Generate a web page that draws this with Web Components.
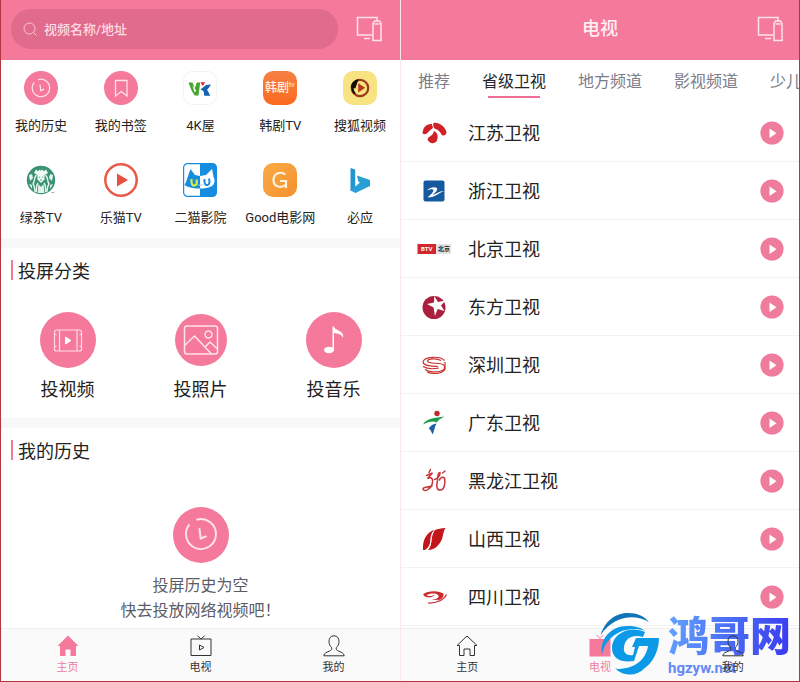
<!DOCTYPE html>
<html lang="zh-CN">
<head>
<meta charset="utf-8">
<meta name="viewport" content="width=device-width, initial-scale=1">
<title>投屏</title>
<style>
  :root {
    --pink: #f5799b;
    --ink: #222;
    --muted: #5c5c68;
    --band: #f8f8f9;
    --line: #f2f2f3;
  }
  body {
    margin: 0;
    background: #fff;
    color: var(--ink);
    font-family: Roboto, "Noto Sans CJK SC", sans-serif;
  }
</style>
</head>
<body>
<cast-app>
  <phone-panel slot="left">
    <app-header slot="header"><search-field></search-field></app-header>
    <quick-grid>
      <quick-link icon="history">我的历史</quick-link>
      <quick-link icon="bookmark">我的书签</quick-link>
      <quick-link icon="wk">4K屋</quick-link>
      <quick-link icon="hanju">韩剧TV</quick-link>
      <quick-link icon="sohu">搜狐视频</quick-link>
      <quick-link icon="lvcha">绿茶TV</quick-link>
      <quick-link icon="lemao">乐猫TV</quick-link>
      <quick-link icon="cat">二猫影院</quick-link>
      <quick-link icon="good">Good电影网</quick-link>
      <quick-link icon="bing">必应</quick-link>
    </quick-grid>
    <page-section heading="投屏分类">
      <category-row>
        <category-button icon="video">投视频</category-button>
        <category-button icon="photo">投照片</category-button>
        <category-button icon="music">投音乐</category-button>
      </category-row>
    </page-section>
    <page-section heading="我的历史">
      <empty-history><span>投屏历史为空</span><span>快去投放网络视频吧！</span></empty-history>
    </page-section>
    <tab-bar slot="footer" current="home"></tab-bar>
  </phone-panel>
  <phone-panel slot="right" class="second">
    <app-header slot="header" heading="电视"></app-header>
    <channel-tabs>
      <button type="button">推荐</button>
      <button type="button" aria-current="true">省级卫视</button>
      <button type="button">地方频道</button>
      <button type="button">影视频道</button>
      <button type="button">少儿</button>
    </channel-tabs>
    <channel-list>
      <channel-row logo="jiangsu">江苏卫视</channel-row>
      <channel-row logo="zhejiang">浙江卫视</channel-row>
      <channel-row logo="beijing">北京卫视</channel-row>
      <channel-row logo="dongfang">东方卫视</channel-row>
      <channel-row logo="shenzhen">深圳卫视</channel-row>
      <channel-row logo="guangdong">广东卫视</channel-row>
      <channel-row logo="heilongjiang">黑龙江卫视</channel-row>
      <channel-row logo="shanxi">山西卫视</channel-row>
      <channel-row logo="sichuan">四川卫视</channel-row>
    </channel-list>
    <tab-bar slot="footer" current="tv"></tab-bar>
  </phone-panel>
  <site-mark slot="mark"></site-mark>
</cast-app>

<script>
const CLOCK = '<path d="M8.9 2.5A10 10 0 1 1 4.3 5.6M10.9 8.1l.9 6.9 3.9-1.6"/>';

/* Artwork on a 34-unit canvas for the shortcut grid. */
const QUICK = {
  history: `<circle cx="17" cy="17" r="17" fill="#f5799b"/><g transform="translate(6.500 6.500) scale(.87)" fill="none" stroke="#ffe3ec" stroke-width="1.400">${CLOCK}</g>`,
  bookmark: `<circle cx="17" cy="17" r="17" fill="#f5799b"/><path d="M11.500 9.500h11.500v15.500l-5.700-4.400-5.800 4.400z" fill="none" stroke="#ffe3ec" stroke-width="1.300"/>`,
  wk: `<rect x=".5" y=".5" width="33" height="33" rx="9" fill="#fff" stroke="#f3f3f3"/>
    <path d="M5.500 11.500h4l2.300 6 2-6h3.400l-1.700 13h-3.700l-3-4.500z" fill="#45a52c"/><path d="M9.500 14.500l2 7 1.600-1.700-1.300-2.300z" fill="#fff"/>
    <path d="M17.500 11.300h4.700l-2.400 3.800z" fill="#d8242c"/>
    <path d="M28 13.500l-5 .5-5.500 4.500 3 1.500.8 4.700h6l-3-5.700z" fill="#1462b0"/><path d="M28.500 16.500l-4.500 2 4 4z" fill="#fff"/>`,
  hanju: `<defs><linearGradient id="a" x2="0" y2="1"><stop stop-color="#f58044"/><stop offset="1" stop-color="#fb6a1e"/></linearGradient></defs>
    <rect width="34" height="34" rx="10" fill="url(#a)"/><text x="2" y="21" font-size="12" font-weight="500" fill="#fff3e9">韩剧</text><text x="26" y="16" font-size="7" fill="#fff3e9">tv</text>`,
  sohu: `<rect width="34" height="34" rx="10" fill="#f8e382"/>
    <circle cx="17" cy="17" r="8.200" fill="none" stroke="#9c3a1c" stroke-width="2.200"/>
    <path d="M16 8.500a8.500 8.500 0 0 0-5 14.500l2-.5a7 7 0 0 1 0-10.500z" fill="#150d06"/><path d="M15.500 8.200a9 9 0 0 0-7.800 8l4.600 1.300z" fill="#150d06"/>
    <path d="M15.200 12.200l7 4.600-7 4.700z" fill="#b8381c"/>`,
  lvcha: `<circle cx="17" cy="17" r="14.200" fill="#3b9272"/>
    <path d="M10 10l2-3.500 2 1.800L17 5.500l3 2.800 2-1.800 2 3.500-3 1.800h-8z" fill="#f0faf5"/>
    <circle cx="17" cy="6.500" r="1" fill="#2f8a67"/>
    <path d="M12.500 12c-3 3-1.500 6-3.500 9 2 2 1 5 2.500 8M21.500 12c3 3 1.500 6 3.500 9-2 2-1 5-2.500 8M14 20c-2 2-1 5-2 9M20 20c2 2 1 5 2 9" stroke="#e9f6f0" stroke-width="1.400" fill="none"/>
    <path d="M13.500 11h7v5.500L17 20l-3.500-3.500z" fill="#f0faf5"/><path d="M15 14.200h1.200M18 14.200h1.200M16 17h2" stroke="#2f8a67" stroke-width=".8"/>
    <path d="M14.500 21l2.500 3 2.500-3 1 9h-7z" fill="#dff1e9"/><path d="M5 12l3-1 1 4-3 3zM29 12l-3-1-1 4 3 3zM5 21l3 1v4zM29 21l-3 1v4z" fill="#e9f6f0"/>
    <path d="M27.500 29.500h2.500" stroke="#777" stroke-width=".7"/>`,
  lemao: `<circle cx="17" cy="17" r="15.700" fill="#fff" stroke="#e85a4a" stroke-width="2.500"/><path d="M13 10.600v13l11-6.500z" fill="#e8503f"/>`,
  cat: `<rect x=".6" y=".6" width="32.800" height="32.800" rx="4" fill="#fff" stroke="#178de0" stroke-width="1.200"/>
    <path d="M17 .6h12.400a4 4 0 0 1 4 4v24.800a4 4 0 0 1-4 4H17z" fill="#178de0"/>
    <path d="M7.500 6l4.500 6 5 1v12.500c-6 .5-12-1-15.500-3.500 2.500-4 3.500-10 6-16z" fill="#178de0"/>
    <path d="M17 13l6-1 6-6c1 4 1 7 2.500 10.500.5 3-1 6-3.500 7-3 1.500-7 2-11 2z" fill="#fff"/>
    <path d="M8.500 16c-.5 5 1 7 3 6.500s2.800-2.500 2-6" fill="none" stroke="#d8ee45" stroke-width="2.200"/><path d="M21.500 16c-.5 5 1 6.500 3 6s2.500-3 1.500-6.500" fill="none" stroke="#178de0" stroke-width="2"/>
    <path d="M14.500 21.500l2.500 1 2.500-1" fill="none" stroke="#8ccbf5" stroke-width="1"/>`,
  good: `<defs><linearGradient id="b" x2="1" y2="1"><stop stop-color="#faab48"/><stop offset="1" stop-color="#f4902c"/></linearGradient></defs>
    <rect width="34" height="34" rx="10" fill="url(#b)"/><path d="M22.500 11.500c-4.500-3.500-12-1.500-12 5.500 0 7 8 8.700 12.500 4.500v-3.500h-6M23 18v7" fill="none" stroke="#fff2dc" stroke-width="2.200"/>`,
  bing: `<path d="M7.500 5l4.700 1.600V25l-4.700 3z" fill="#2196cf"/><path d="M14 12.500l13 4.500v6L12.500 30l-5-2.500 9.500-8-1.700-1z" fill="#2a9fd6"/>`
};

/* Line artwork for the large round buttons, 56-unit canvas. */
const ROUND = {
  video: `<circle cx="28" cy="28" r="28" fill="#f5799b"/><g fill="none" stroke="#ffdce7" stroke-width="1.200"><rect x="14.500" y="18" width="27" height="21" rx="2"/><path d="M19.500 18v21M37 18v21M14.500 22.500h2M14.500 34.500h2M39.500 22.500h2M39.500 34.500h2"/></g><path d="M25.500 25v7l5.500-3.500z" fill="#fff" stroke="#fff" stroke-linejoin="round"/>`,
  photo: `<circle cx="28" cy="28" r="26" fill="#f5799b"/><g fill="none" stroke="#ffe3ec" stroke-width="1.500" stroke-linejoin="round"><rect x="11.500" y="14" width="33" height="28" rx="2.500"/><circle cx="35.500" cy="22.500" r="3.500"/><path d="M11.500 33.500l10-9.500L38.500 42M32 35l5-5 7.500 7"/></g>`,
  music: `<circle cx="28" cy="28" r="28" fill="#f5799b"/><ellipse cx="23" cy="38" rx="5" ry="3.200" fill="#fff"/><path d="M26.500 38.500V14.500H28c.5 4.300 11 4 9 11.500-1.200-4-5.500-4.500-9-5v17.500z" fill="#fff"/>`,
  clock: `<circle cx="28" cy="28" r="28" fill="#f5799b"/><g transform="translate(10 9) scale(1.5)" fill="none" stroke="#ffe3ec" stroke-width="1.300">${CLOCK}</g>`
};

/* Station logos, 36-unit canvas. */
const LOGO = {
  jiangsu: `<g fill="#cf2127"><path d="M6.500 18.500C7 12 10.500 8.500 16 9c-.5 2.500 3 3-1 5.500-3 2-4.500 6.500-8.500 4z"/><path d="M17.500 8C23 7 29.500 12 30.500 17.500c0 2.500-3.500 4-5 2.300C24 15.500 21 14.500 18.500 13.500c-1.500-1.500-1.500-4-1-5.500z"/><path d="M11.500 24.500c1-4 5-2.500 6.500-8.500 3.500 1.500 4.500 5.500 3 9.500-2 4-8 3.500-9.500-1z"/></g>`,
  zhejiang: `<rect x="7.500" y="7.500" width="21" height="21" rx="2" fill="#155a9e"/><path d="M11 17.500c3-4 12-4.500 10-.5-1 2-3 3.500-4.500 5 4-1 7.500-4.500 12-4-5 1-9 6.500-17 6.500 2-2 6-5 6-7.500-1-1.200-4-.5-6.500.5z" fill="#fff"/>`,
  beijing: `<rect x="1.500" y="13" width="18.500" height="10" fill="#d0282c"/><rect x="20" y="13" width="15" height="10" fill="#e3e3e3"/><text x="5" y="20.300" font-size="6" font-weight="700" fill="#fff">BTV</text><text x="22" y="20.300" font-size="6" font-weight="700" fill="#222">北京</text>`,
  dongfang: `<circle cx="18" cy="18.500" r="11.500" fill="#a91f3d"/><path d="M18.300 7l3.700 6 7.500-1.500-4.500 5 3.500 5.500-6.800-2-2.800 7-1.300-8.500-6.600-3.500 7-1.500z" fill="#fff"/>`,
  shenzhen: `<g fill="none" stroke="#c8302f" stroke-width="1.200"><path d="M28.500 13.500C24 8.500 8 9.500 7 15c0 4 9 4 15 4.500"/><path d="M25 13.500c-4-2.500-13-2-13.500.5 0 2.500 6 2 11.500 2.500 7 .5 7.500 6 2 7.500-5 1.500-12 1.300-16-1.500"/><path d="M7 19.500c4 2.500 11 2.500 16 1.500M11 25c5 2.500 16 2 18-3v-7"/></g>`,
  guangdong: `<circle cx="21" cy="8.500" r="2.700" fill="#c2272d"/><path d="M7 19.500c3-5.500 11-7 22-8-5 2.500-6.500 3-8 6-4-2-9-.5-14 2z" fill="#1d9b4c"/><path d="M20.500 18.500c-2 3-2 7-3.800 11-1.700-3-2-5-4-6 2-3 4.500-4.500 7.800-5z" fill="#2160a9"/>`,
  heilongjiang: `<g fill="none" stroke="#c7343a" stroke-width="1.500" stroke-linecap="round"><path d="M14.500 6.500l-1.500 3M10.500 12.500l6-2.500-5 5.500c5-2 6 1 4.500 6s-8 8-9 4.500c0-2 4-1.500 9-3"/><path d="M18.500 16.500c3-.5 6-4.500 5.500-7-2 0-2.500 5-2.500 8-1.500 6-.5 10 3 9.500 4-.5 5-7 4-12-1.500-1.500-4.500-.5-5 2M26.500 10l2.500-2"/></g>`,
  shanxi: `<path d="M7 29c-.5-10 3-17 11-20-5 7-1 15-9 20z" fill="#c3151c"/><path d="M12 29c5-5 2-14 7-20 3-1.500 6-1.500 10.500-2-3 5-2 9-5 14-3 5-7 8-12.500 8z" fill="#c3151c"/><path d="M17 11c-4 6 0 12-5.500 17" stroke="#fff" fill="none"/>`,
  sichuan: `<path d="M7 15.500c4-4 17-4.500 20-.5 2 4-5 7-11.500 5.500 4 0 8-1.500 7-4-1.500-3-9-2.500-12-.5 2 2 6 1 8-.5 0 3-9 4.500-11.500 0z" fill="#c92b2f"/><path d="M12 24c8 .5 16-3 18.500-8.500M26.500 14c1.500 3-1 5.500-5 7" fill="none" stroke="#c92b2f" stroke-width="1.200"/>`
};

const TAB = {
  home: on => on
    ? '<path d="M11 .5L21.500 11H19v10h-5.500v-6.500h-5V21H3V11H.5z" fill="#f5799b"/>'
    : '<path d="M11 1L1 10.500h2.500v10H8v-6.500h6v6.500h4.500v-10H21z" fill="none" stroke="#333"/>',
  tv: on => on
    ? '<path d="M.5 4h21v17.500H.5z" fill="#f5799b"/><path d="M7.500 0L11 3.500 14.500 0" fill="none" stroke="#f5799b"/>'
    : '<path d="M1 4h20v16.500H1zM7.500.8L11 4 14.500.8M9.500 10v5l4.500-2.500z" fill="none" stroke="#333"/>',
  me: () => '<path d="M11 .8c-3.500 0-5 2.500-5 5.700 0 3 1.200 4.500 2.700 6.200.5 1.800-.5 2.500-2.200 3.300C3.500 17.500 1 18 .8 20.800h20.400C21 18 18.500 17.500 15.500 16c-1.700-.8-2.700-1.500-2.200-3.300C14.800 11 16 9.500 16 6.500 16 3.300 14.500.8 11 .8z" fill="none" stroke="#333"/>'
};

const svg = (size, body, shown = size) =>
  `<svg viewBox="0 0 ${size} ${size}" width="${shown}" height="${shown}" aria-hidden="true">${body}</svg>`;

const BASE = `*{box-sizing:border-box}:host([hidden]){display:none}svg{display:block;flex:none}
  button,a{font:inherit;color:inherit;text-decoration:none;background:none;border:0;padding:0;margin:0;cursor:pointer}`;

class BaseElement extends HTMLElement {
  connectedCallback() {
    if (this.shadowRoot) return;
    this.attachShadow({ mode: 'open' }).innerHTML = `<style>${BASE}${this.styles()}</style>${this.markup()}`;
  }
}

customElements.define('cast-app', class extends BaseElement {
  styles() { return `
    :host{display:grid;grid-template-columns:minmax(0,1fr) minmax(0,1fr);min-height:100vh;position:relative;
      border:1px solid #b4343f;border-top:0;box-sizing:border-box}
    ::slotted([slot=right]){border-left:1px solid #fbe9ee}`; }
  markup() { return '<slot name="left"></slot><slot name="right"></slot><slot name="mark"></slot>'; }
});

customElements.define('phone-panel', class extends BaseElement {
  styles() { return `
    :host{display:flex;flex-direction:column;min-width:0;box-sizing:border-box}
    main{flex:1;min-width:0}`; }
  markup() { return '<slot name="header"></slot><main><slot></slot></main><slot name="footer"></slot>'; }
});

customElements.define('app-header', class extends BaseElement {
  styles() { return `
    :host{display:grid;grid-template-columns:1fr auto;align-items:center;gap:18px;height:60px;padding:0 18px 2px 10px;
      box-sizing:border-box;background:var(--pink);color:#fff}
    :host([heading]){grid-template-columns:26px 1fr 26px;padding:0 16px 2px}
    h1{grid-column:2;margin:0;text-align:center;font-size:18px;line-height:24px;font-weight:500;color:#fff0f4}`; }
  markup() {
    const h = this.getAttribute('heading');
    return `${h ? `<h1>${h}</h1>` : '<slot></slot>'}<button type="button" aria-label="选择投屏设备">${svg(26,
      '<path d="M16 19H1.500V1.500H21V5M8 22.500h6" fill="none" stroke="#ffe3ec" stroke-width="1.500"/><path d="M17 24.500V7.500l1.500-2.500h5L25 7.500v17zM18.500 8h5" fill="none" stroke="#ffe3ec" stroke-width="1.500"/>')}</button>`;
  }
});

customElements.define('search-field', class extends BaseElement {
  styles() { return `
    :host{display:block;min-width:0}
    label{display:flex;align-items:center;gap:7px;height:40px;padding:0 12px;border-radius:20px;background:#e06b8c}
    input{flex:1;min-width:0;height:24px;padding:0;border:0;outline:0;background:none;color:#ffdbe5;font:inherit;font-size:13px;font-weight:500}
    input::placeholder{color:#ffdbe5;opacity:1}`; }
  markup() {
    return `<label>${svg(14, '<circle cx="6.500" cy="6.500" r="5.500" fill="none" stroke="#ffc4d4"/><path d="M10.500 10.500l3 3" stroke="#ffc4d4"/>')}
      <input type="text" placeholder="视频名称/地址" aria-label="视频名称/地址"></label>`;
  }
});

customElements.define('quick-grid', class extends BaseElement {
  styles() { return `:host{display:grid;grid-template-columns:repeat(5,minmax(0,1fr));row-gap:27px;padding:11px 0 10px}`; }
  markup() { return '<slot></slot>'; }
});

customElements.define('quick-link', class extends BaseElement {
  styles() { return `
    :host{display:block}
    a{display:flex;flex-direction:column;align-items:center;gap:11px;font-size:13px;line-height:20px;white-space:nowrap}`; }
  markup() { return `<a href="#${this.getAttribute('icon')}">${svg(34, QUICK[this.getAttribute('icon')])}<span><slot></slot></span></a>`; }
});

customElements.define('page-section', class extends BaseElement {
  styles() { return `
    :host{display:block;border-top:10px solid var(--band);padding:12px 0 0}
    h2{display:flex;gap:5px;margin:0 10px;font-size:18px;line-height:24px;font-weight:400}
    h2::before{content:"";width:2px;height:20px;background:#ee7c9c}`; }
  markup() { return `<h2>${this.getAttribute('heading')}</h2><slot></slot>`; }
});

customElements.define('category-row', class extends BaseElement {
  styles() { return `:host{display:grid;grid-template-columns:repeat(3,minmax(0,1fr));padding:28px 0 16px}`; }
  markup() { return '<slot></slot>'; }
});

customElements.define('category-button', class extends BaseElement {
  styles() { return `
    :host{display:flex;justify-content:center}
    button{display:flex;flex-direction:column;align-items:center;gap:10px;font-size:18px;line-height:24px}`; }
  markup() { return `<button type="button">${svg(56, ROUND[this.getAttribute('icon')])}<span><slot></slot></span></button>`; }
});

customElements.define('empty-history', class extends BaseElement {
  styles() { return `
    :host{display:flex;flex-direction:column;align-items:center;padding:43px 0 5px;color:var(--muted);font-size:16px;line-height:25px}
    svg{margin-bottom:10px}`; }
  markup() { return `${svg(56, ROUND.clock)}<slot></slot>`; }
});

customElements.define('channel-tabs', class extends BaseElement {
  styles() { return `
    :host{display:flex;gap:32px;height:44px;padding:0 0 0 17px;overflow:hidden;box-sizing:border-box}
    ::slotted(button){flex:none;position:relative;display:block;height:38px;padding:6px 0 0;border:0;
      background:linear-gradient(var(--bar,transparent),var(--bar,transparent)) center bottom/52px 2px no-repeat;
      font:inherit;font-size:16px;line-height:32px;color:#7d7d8a;white-space:nowrap;cursor:pointer}
    ::slotted([aria-current]){--bar:#ee6f93;color:#26262c}`; }
  markup() { return '<slot></slot>'; }
});

customElements.define('channel-list', class extends BaseElement {
  styles() { return ':host{display:block}'; }
  connectedCallback() { super.connectedCallback(); this.setAttribute('role', 'list'); }
  markup() { return '<slot></slot>'; }
});

customElements.define('channel-row', class extends BaseElement {
  styles() { return `
    :host{display:flex;align-items:center;gap:16px;height:58px;padding:0 15px;border-bottom:1px solid var(--line);
      box-sizing:border-box;font-size:18px;line-height:24px}
    span{flex:1;padding-top:2px}`; }
  connectedCallback() { super.connectedCallback(); this.setAttribute('role', 'listitem'); }
  markup() {
    return `${svg(36, LOGO[this.getAttribute('logo')])}<span><slot></slot></span>
      <button type="button" aria-label="播放">${svg(24, '<circle cx="12" cy="12" r="11.600" fill="#f07c9d"/><path d="M9.500 7.500v9.500l7-4.700z" fill="#fff"/>')}</button>`;
  }
});

customElements.define('tab-bar', class extends BaseElement {
  styles() { return `
    :host{display:block}
    nav{display:grid;grid-template-columns:repeat(3,minmax(0,1fr));padding:6px 0;border-top:1px solid #efeff0;background:#fafafb}
    a{display:flex;flex-direction:column;align-items:center;gap:4px;font-size:11px;line-height:14px;color:#333}
    a[aria-current]{color:#ee7c9c}
    a:last-child{position:relative;z-index:2}`; }
  markup() {
    const current = this.getAttribute('current');
    const items = [['home', '主页'], ['tv', '电视'], ['me', '我的']];
    return `<nav>${items.map(([id, label]) => {
      const on = id === current;
      return `<a href="#${id}"${on ? ' aria-current="page"' : ''}>${svg(22, TAB[id](on))}<span>${label}</span></a>`;
    }).join('')}</nav>`;
  }
});

/* Site badge floating over the lower right corner. */
customElements.define('site-mark', class extends BaseElement {
  styles() { return `
    :host{position:absolute;right:8px;bottom:2px;z-index:1;display:flex;align-items:center;gap:5px;pointer-events:none}
    div{display:flex;flex-direction:column}
    b{font-weight:900;font-size:41px;line-height:44px;background:linear-gradient(100deg,#63a4ff,#4a6cf5 50%,#3a38f0);
      -webkit-background-clip:text;background-clip:text;color:transparent}
    small{font:700 15px/18px Roboto,sans-serif;color:#6488f5}`; }
  markup() {
    return `${svg(66, `<path d="M3.500 22C9 6 20 0 31 0c9 0 16 3 21 9-14-8-34-7-48.500 13z" fill="#0f74b8"/>
      <path d="M5 42C2 26 14 13 30 13c9 0 15 2 18 5C32 12 9 20 5 42z" fill="#0c9ae6"/>
      <path d="M48 19C34 12 15 20 15 35c0 11 10 15 22 13l5-15h9c-2 14-14 23-31 23 4 3 9 4 13 4C49 60 62 44 62 25H39l-4 9h3l-2 8c-6 1-10-2-9-8 1-9 9-13 19-10z" fill="#0c9ae6"/>
      <path d="M18 55c8 4 20 3 29 1-7 7-21 8-29-1z" fill="#0c9ae6"/>`)}<div><b>鸿哥网</b><small>hgzyw.net</small></div>`;
  }
});
</script>
</body>
</html>
